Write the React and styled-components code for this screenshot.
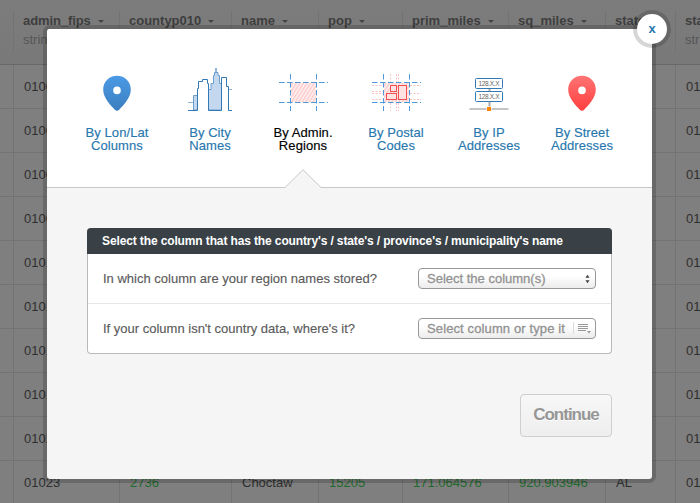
import React from "react";
import styled, { createGlobalStyle, css } from "styled-components";

const GlobalStyle = createGlobalStyle`
  * { box-sizing: border-box; }
  body {
    margin: 0;
    overflow: hidden;
    background: #7f7f7f;
    font-family: "Liberation Sans", Arial, sans-serif;
    font-size: 13px;
    line-height: 16px;
  }
  #root { overflow: hidden; }
`;

const Page = styled.div`
  position: relative;
  width: 700px;
  height: 503px;
  overflow: hidden;
`;

const gridColumns = css`
  display: grid;
  width: 781px;
  grid-template-columns: 13px 106px 112px 87px 84px 106px 97px 70px 106px;
`;

const TableHead = styled.div`
  ${gridColumns}
  height: 65px;
  padding-top: 11px;
  background: linear-gradient(#7c7c7c, #797979);
  border-bottom: 1px solid #686868;
`;

const HeadCell = styled.div`
  height: 42px;
  padding-left: 9px;
  border-left: 1px solid ${(p) => (p.$blank ? "transparent" : "#737373")};
  color: #3e3e3e;
`;

const HeadName = styled.div`
  display: flex;
  align-items: center;
  height: 19px;
  gap: 7px;
  font-weight: bold;
  letter-spacing: ${(p) => p.$spacing || 0}px;
`;

const HeadType = styled.div`
  height: 19px;
  line-height: 19px;
  color: #565656;
`;

const Caret = styled.i`
  border: 3px solid transparent;
  border-top-color: #444;
  border-bottom: 0;
  margin-top: 2px;
`;

const TableRow = styled.div`
  ${gridColumns}
  height: 44px;
  border-bottom: 1px solid #737373;
`;

const Cell = styled.div`
  padding: 14px 0 0 10px;
  border-left: 1px solid ${(p) => (p.$blank ? "transparent" : "#737373")};
  color: ${(p) => (p.$numeric ? "#1f6b2d" : "#2f2f2f")};
`;

const Backdrop = styled.div`
  position: absolute;
  inset: 0;
  padding: 25px 0 0 43px;
`;

const Dialog = styled.section`
  position: relative;
  width: 613px;
  height: 458px;
  border: 4px solid rgba(0, 0, 0, 0.17);
  border-radius: 7px;
  background: #f5f5f5;
  background-clip: padding-box;
`;

const CloseButton = styled.button`
  position: absolute;
  top: -19px;
  right: -19px;
  width: 38px;
  height: 38px;
  padding: 0;
  border: 4px solid rgba(0, 0, 0, 0.16);
  border-radius: 50%;
  background: #fff;
  background-clip: padding-box;
  color: #2878b0;
  font: bold 13px/16px "Liberation Sans", Arial, sans-serif;
`;

const Tabs = styled.nav`
  display: flex;
  height: 159px;
  padding: 37px 0 0 23px;
  background: #fff;
  border-bottom: 1px solid #c8c8c8;
  border-radius: 3px 3px 0 0;
`;

const Tab = styled.div`
  position: relative;
  display: flex;
  flex-direction: column;
  align-items: center;
  width: 93px;
  padding-left: 1px;
  color: ${(p) => (p.$active ? "#000" : "#2777ae")};
`;

const TabLabel = styled.div`
  margin-top: 14px;
  line-height: 13px;
  text-align: center;
  letter-spacing: 0.08px;
  -webkit-text-stroke: 0.15px currentColor;
`;

const TabIcon = styled.svg`
  display: block;
  width: 50px;
  height: 46px;
`;

const Notch = styled.svg`
  position: absolute;
  left: 29px;
  bottom: -1px;
  width: 36px;
  height: 19px;
`;

const Body = styled.div`
  display: flex;
  flex-direction: column;
  align-items: flex-end;
  padding: 40px 40px 0;
`;

const Form = styled.div`
  width: 525px;
  height: 126px;
  border: 1px solid #b7b9ba;
  border-top: 0;
  border-radius: 4px;
  background: #fff;
`;

const FormTitle = styled.div`
  height: 26px;
  margin: 0 -1px;
  padding-left: 15px;
  border-radius: 4px 4px 0 0;
  background: #394147;
  color: #fff;
  font-weight: bold;
  font-size: 12px;
  letter-spacing: -0.125px;
  line-height: 27px;
  white-space: nowrap;
`;

const Field = styled.div`
  display: flex;
  align-items: center;
  justify-content: space-between;
  height: ${(p) => (p.$last ? 49 : 50)}px;
  padding: 0 15px;
  border-bottom: ${(p) => (p.$last ? 0 : 1)}px solid #e7e7e7;
  color: #5b5b5b;
`;

const FieldLabel = styled.span`
  -webkit-text-stroke: 0.15px currentColor;
`;

const Picker = styled.div`
  display: flex;
  align-items: center;
  justify-content: space-between;
  width: 178px;
  height: 21px;
  padding: 0 ${(p) => p.$end}px 0 8px;
  border: 1px solid #989898;
  border-radius: 4px;
  background: linear-gradient(#fff 35%, #ececec);
  color: #929292;
  letter-spacing: ${(p) => p.$spacing || 0}px;
  -webkit-text-stroke: 0.3px #929292;
  white-space: nowrap;
`;

const Continue = styled.button`
  width: 92px;
  height: 43px;
  margin-top: 40px;
  padding: 0 0 2px;
  border: 1px solid #cfcfcf;
  border-radius: 4px;
  background: linear-gradient(#f7f7f7, #eee);
  color: #969696;
  font: bold 17px/21px "Liberation Sans", Arial, sans-serif;
  letter-spacing: -1px;
  text-shadow: 0 1px 0 #fff;
`;

const Pin = ({ id, from, to }) => (
  <TabIcon viewBox="0 0 50 46">
    <defs>
      <linearGradient id={id} x1="0" y1="0" x2="0" y2="1">
        <stop offset="0" stopColor={from} />
        <stop offset="1" stopColor={to} />
      </linearGradient>
    </defs>
    <path
      fillRule="evenodd"
      fill={`url(#${id})`}
      d="M25 9.8C17.2 9.8 11.2 16 11.2 23.4C11.2 32 19 39.5 22.6 43.4Q25 46 27.4 43.4C31 39.5 38.8 32 38.8 23.4C38.8 16 32.8 9.8 25 9.8ZM25 20.6A3.8 3.8 0 1 1 25 28.2A3.8 3.8 0 1 1 25 20.6Z"
    />
  </TabIcon>
);

const CityIcon = () => (
  <TabIcon viewBox="0 0 50 46" fill="none">
    <path d="M3 36.5H8.5M43.5 23.5H47" stroke="#8fb8dc" />
    <path d="M8.5 44V29.5H12.5V44Z" fill="#c3d8ee" stroke="#6a9fce" />
    <path
      d="M23.5 44V23.5H26V17.5H28.5V9.5H29.5V6.5H31V2V6.5H33V9.5H34.5V17.5H36.5V44Z"
      fill="#c3d8ee"
      stroke="#6a9fce"
    />
    <path d="M13 23H14V16H18V14H22V18H23V44H13Z" fill="#fff" />
    <path
      d="M3 44.5H12.5V22.5H13.5V15.5H17.5V13.5H22.5V17.5H23.5V44.5H36.5V11.5H41.5V20.5H43.5V44.5H47"
      stroke="#3379b5"
    />
  </TabIcon>
);

const Hatch = ({ id }) => (
  <defs>
    <pattern id={id} width="3" height="3" patternUnits="userSpaceOnUse" patternTransform="rotate(32)">
      <rect width="3" height="3" fill="#fff2f2" />
      <rect width="1.3" height="3" fill="#ffc6c6" />
    </pattern>
  </defs>
);

const BlueGuides = () => (
  <path
    d="M1 16.5H50M1 36.5H50M12.5 8V45M38.5 8V45"
    stroke="#4d97da"
    strokeDasharray="5.5 2.5"
  />
);

const RegionIcon = () => (
  <TabIcon viewBox="0 0 50 46" fill="none">
    <Hatch id="regionHatch" />
    <rect x="13" y="17" width="25" height="19" fill="url(#regionHatch)" />
    <BlueGuides />
  </TabIcon>
);

const PostalIcon = () => (
  <TabIcon viewBox="0 0 50 46" fill="none">
    <Hatch id="postalHatch" />
    <rect x="13" y="17" width="25" height="19" fill="url(#postalHatch)" />
    <path
      d="M1 19.5H12M1 25.5H12M1 27.5H12M1 33.5H12M39 19.5H50M39 27.5H50M39 33.5H50M19.5 8V17M25.5 8V17M27.5 8V17M19.5 37V45M25.5 37V45M27.5 37V45"
      stroke="#fbc4c4"
      strokeDasharray="2 1.5"
    />
    <BlueGuides />
    <g stroke="#f05050" fill="#ffe3e3">
      <rect x="19.5" y="19.5" width="6" height="6" />
      <rect x="15.5" y="27.5" width="10" height="6" />
      <rect x="27.5" y="19.5" width="8" height="14" />
    </g>
  </TabIcon>
);

const IpIcon = () => (
  <TabIcon viewBox="0 0 50 46">
    <path d="M25.5 22V26M25.5 35V42" stroke="#aaa" strokeWidth="2" />
    <path d="M5.5 43H44.5" stroke="#b2b2b2" strokeWidth="1.6" />
    <g fill="#fff" stroke="#3379b5">
      <rect x="11.5" y="12.5" width="27" height="10" rx="1" />
      <rect x="11.5" y="25.5" width="27" height="10" rx="1" />
    </g>
    <g fill="#666" fontSize="6.5" textAnchor="middle">
      <text x="25" y="20" textLength="21">128.X.X</text>
      <text x="25" y="33" textLength="21">128.X.X</text>
    </g>
    <rect x="22.5" y="40.5" width="5" height="5" fill="#fff" />
    <rect x="23" y="41" width="4" height="4" fill="#ff8400" />
  </TabIcon>
);

const Stepper = () => (
  <svg width="5" height="10" viewBox="0 0 5 10" fill="#444">
    <path d="M2.5 0.8L4.6 3.7H0.4ZM2.5 9.2L0.4 6.3H4.6Z" />
  </svg>
);

const ListGlyph = () => (
  <svg width="18" height="13" viewBox="0 0 18 13">
    <path d="M0.5 0V12" stroke="#ddd" />
    <path d="M5 2.5H15M5 4.5H15M5 6.5H15M5 8.5H13" stroke="#999" />
    <path d="M14 9H18L16 11.5Z" fill="#999" />
  </svg>
);

const headers = [
  { name: "admin_fips", type: "string", spacing: -0.1 },
  { name: "countyp010", type: "number" },
  { name: "name", type: "string" },
  { name: "pop", type: "number" },
  { name: "prim_miles", type: "number" },
  { name: "sq_miles", type: "number" },
  { name: "state", type: "string" },
  { name: "state_fips", type: "string" },
];

const codes = ["01003", "01005", "01007", "01009", "01013", "01015", "01017", "01019", "01021", "01023"];
const county = ["2736", "Choctaw", "15205", "171.064576", "920.903946", "AL"];
const numericColumns = [0, 2, 3, 4];

const tabs = [
  { lines: ["By Lon/Lat", "Columns"], icon: <Pin id="bluePin" from="#4b9ae6" to="#3b7fbe" /> },
  { lines: ["By City", "Names"], icon: <CityIcon /> },
  { lines: ["By Admin.", "Regions"], icon: <RegionIcon />, active: true },
  { lines: ["By Postal", "Codes"], icon: <PostalIcon /> },
  { lines: ["By IP", "Addresses"], icon: <IpIcon /> },
  { lines: ["By Street", "Addresses"], icon: <Pin id="redPin" from="#ff7474" to="#ff3f3f" /> },
];

export default function App() {
  return (
    <Page>
      <GlobalStyle />
      <TableHead>
        <HeadCell $blank />
        {headers.map((h) => (
          <HeadCell key={h.name}>
            <HeadName $spacing={h.spacing}>
              {h.name}
              <Caret />
            </HeadName>
            <HeadType>{h.type}</HeadType>
          </HeadCell>
        ))}
      </TableHead>
      {codes.map((code) => (
        <TableRow key={code}>
          <Cell $blank />
          <Cell>{code}</Cell>
          {county.map((value, i) => (
            <Cell key={value} $numeric={numericColumns.includes(i)}>
              {code === "01023" ? value : ""}
            </Cell>
          ))}
          <Cell>01</Cell>
        </TableRow>
      ))}
      <Backdrop>
        <Dialog>
          <Tabs>
            {tabs.map((tab, i) => (
              <Tab key={i} $active={tab.active}>
                {tab.icon}
                <TabLabel>
                  {tab.lines[0]}
                  <br />
                  {tab.lines[1]}
                </TabLabel>
                {tab.active && (
                  <Notch viewBox="0 0 36 19">
                    <path d="M0 18.5L18 0.5L36 18.5V19H0Z" fill="#f5f5f5" />
                    <path d="M0 18.5L18 0.7L36 18.5" fill="none" stroke="#c8c8c8" />
                  </Notch>
                )}
              </Tab>
            ))}
          </Tabs>
          <Body>
            <Form>
              <FormTitle>
                Select the column that has the country's / state's / province's / municipality's name
              </FormTitle>
              <Field>
                <FieldLabel>In which column are your region names stored?</FieldLabel>
                <Picker $end={5}>
                  Select the column(s)
                  <Stepper />
                </Picker>
              </Field>
              <Field $last>
                <FieldLabel>If your column isn't country data, where's it?</FieldLabel>
                <Picker $end={4} $spacing={0.12}>
                  Select column or type it
                  <ListGlyph />
                </Picker>
              </Field>
            </Form>
            <Continue>Continue</Continue>
          </Body>
          <CloseButton>x</CloseButton>
        </Dialog>
      </Backdrop>
    </Page>
  );
}
